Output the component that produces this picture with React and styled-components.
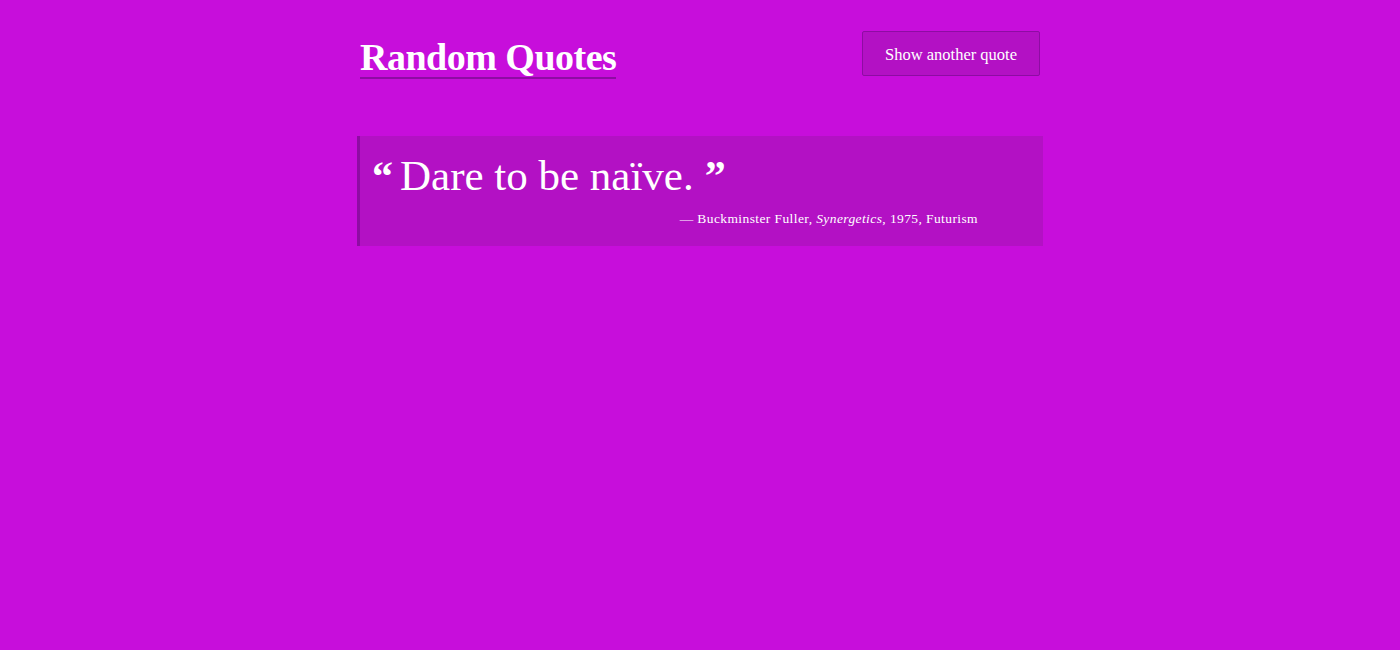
import React from "react";
import styled, { createGlobalStyle } from "styled-components";

const GlobalStyle = createGlobalStyle`
  html, body {
    margin: 0;
    padding: 0;
    background-color: #c70edb;
  }
  body {
    font-family: "Liberation Serif", "Times New Roman", serif;
    color: #ffffff;
    min-height: 650px;
  }
`;

const Page = styled.div`
  width: 686px;
  margin: 0 auto;
  padding-top: 31px;
`;

const Header = styled.header`
  display: flex;
  justify-content: space-between;
  align-items: flex-start;
  padding: 0 3px;
`;

const Title = styled.h1`
  margin: 0;
  padding-top: 6px;
  font-size: 38px;
  font-weight: 700;
  line-height: 40px;
  letter-spacing: -0.5px;
`;

const TitleLink = styled.a`
  color: #ffffff;
  text-decoration: none;
  display: inline-block;
  border-bottom: 2px solid #8e0ca3;
`;

const Button = styled.button`
  width: 178px;
  height: 45px;
  padding: 3px 0 0;
  background-color: #b311c4;
  border: 1px solid #8e0ca3;
  border-radius: 2px;
  color: #ffffff;
  font-family: "Liberation Serif", "Times New Roman", serif;
  font-size: 16.5px;
  cursor: pointer;
`;

const Quote = styled.blockquote`
  margin: 57px 0 0;
  padding: 13px 20px 19px 12px;
  background-color: #b311c4;
  border-left: 3px solid #8e0ca3;
`;

const QuoteText = styled.p`
  margin: 0;
  font-size: 43px;
  line-height: 54px;
`;

const Mark = styled.span`
  font-weight: 700;
  font-size: 42px;
  line-height: 0;
  margin: ${(p) => (p.$open ? "0 7px 0 0" : "0 0 0 11px")};
`;

const Cite = styled.footer`
  margin-top: 8px;
  padding-right: 45px;
  text-align: right;
  font-size: 13.5px;
  letter-spacing: 0.4px;

  em {
    font-style: italic;
  }
`;

export default function App() {
  return (
    <>
      <GlobalStyle />
      <Page>
        <Header>
          <Title>
            <TitleLink href="#">Random Quotes</TitleLink>
          </Title>
          <Button type="button">Show another quote</Button>
        </Header>
        <Quote>
          <QuoteText>
            <Mark $open>“</Mark>Dare to be naïve.<Mark>”</Mark>
          </QuoteText>
          <Cite>
            — Buckminster Fuller, <em>Synergetics</em>, 1975, Futurism
          </Cite>
        </Quote>
      </Page>
    </>
  );
}
